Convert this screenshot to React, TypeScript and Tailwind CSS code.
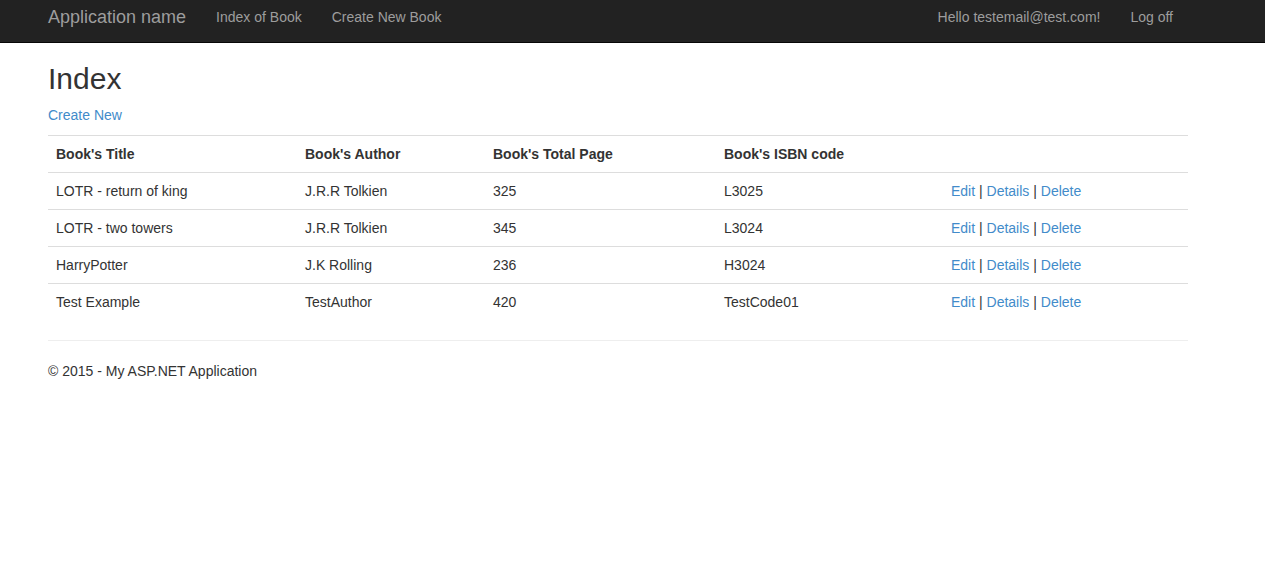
import React from "react";

const rows = [
  ["LOTR - return of king", "J.R.R Tolkien", "325", "L3025"],
  ["LOTR - two towers", "J.R.R Tolkien", "345", "L3024"],
  ["HarryPotter", "J.K Rolling", "236", "H3024"],
  ["Test Example", "TestAuthor", "420", "TestCode01"],
];

export default function App() {
  return (
    <div className="min-h-[578px] bg-white text-[14px] leading-5 text-[#333]" style={{ fontFamily: '"Liberation Sans", Arial, sans-serif' }}>
      <nav className="h-[43px] bg-[#222] border-b border-[#080808]">
        <div className="pl-[48px] w-[1188px] flex">
          <a className="text-[18px] leading-5 pt-[7px] pr-[15px] text-[#9d9d9d]">Application name</a>
          <a className="pt-[7px] px-[15px] text-[#9d9d9d]">Index of Book</a>
          <a className="pt-[7px] px-[15px] text-[#9d9d9d]">Create New Book</a>
          <div className="ml-auto flex">
            <a className="pt-[7px] px-[15px] text-[#9d9d9d]">Hello testemail@test.com!</a>
            <a className="pt-[7px] px-[15px] text-[#9d9d9d]">Log off</a>
          </div>
        </div>
      </nav>
      <div className="pl-[48px]">
        <div className="w-[1140px]">
          <h2 className="text-[30px] leading-[33px] mt-[19px] mb-[10px] font-normal">Index</h2>
          <p className="mb-[10px]">
            <a className="text-[#428bca]">Create New</a>
          </p>
          <table className="w-[1140px] table-fixed border-collapse">
            <colgroup>
              <col className="w-[249px]" />
              <col className="w-[188px]" />
              <col className="w-[231px]" />
              <col className="w-[227px]" />
              <col className="w-[245px]" />
            </colgroup>
            <tbody>
              <tr>
                <th className="text-left font-bold p-2 border-t border-[#ddd]">Book's Title</th>
                <th className="text-left font-bold p-2 border-t border-[#ddd]">Book's Author</th>
                <th className="text-left font-bold p-2 border-t border-[#ddd]">Book's Total Page</th>
                <th className="text-left font-bold p-2 border-t border-[#ddd]">Book's ISBN code</th>
                <th className="p-2 border-t border-[#ddd]"></th>
              </tr>
              {rows.map((r) => (
                <tr key={r[0]}>
                  {r.map((c, i) => (
                    <td key={i} className="p-2 border-t border-[#ddd]">{c}</td>
                  ))}
                  <td className="p-2 border-t border-[#ddd]">
                    <a className="text-[#428bca]">Edit</a> | <a className="text-[#428bca]">Details</a> | <a className="text-[#428bca]">Delete</a>
                  </td>
                </tr>
              ))}
            </tbody>
          </table>
          <hr className="mt-[20px] mb-[20px] border-t border-[#eee]" />
          <footer>
            <p>© 2015 - My ASP.NET Application</p>
          </footer>
        </div>
      </div>
    </div>
  );
}
